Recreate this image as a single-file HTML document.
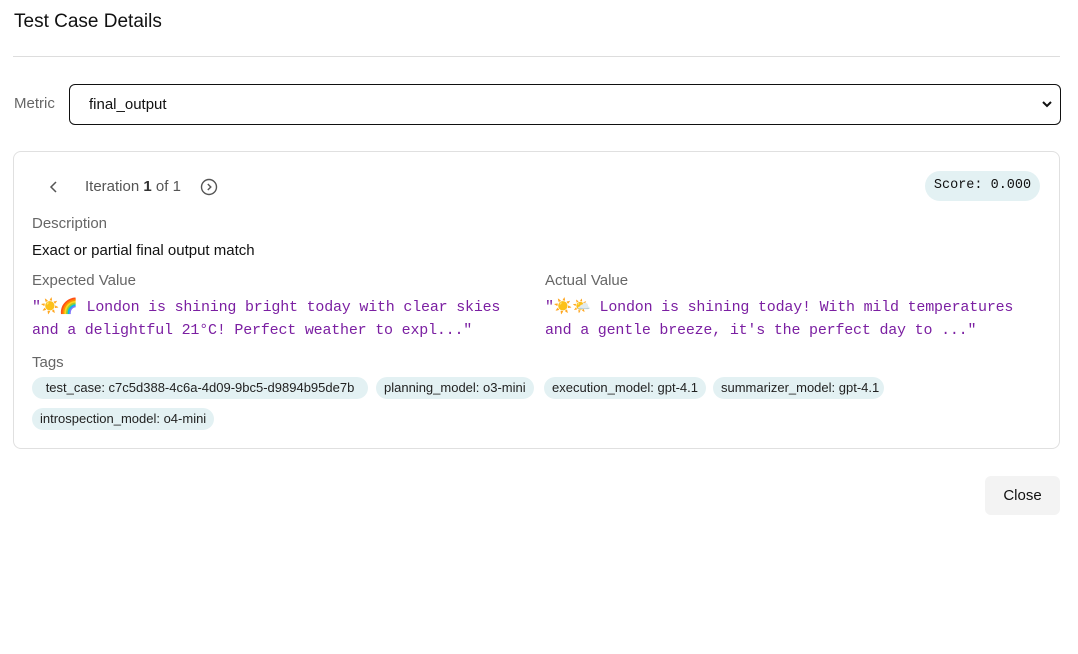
<!DOCTYPE html>
<html><head><style>
body{margin:0;width:1078px;height:654px;background:#fff;font-family:"Liberation Sans",sans-serif;color:#111;position:relative;overflow:hidden}
.a{position:absolute;white-space:nowrap}
.mono{font-family:"Liberation Mono",monospace;font-size:15px;letter-spacing:-0.2px;color:#7b1fa2;line-height:23px}
.lbl{font-size:15px;color:#666}
.tag{position:absolute;height:22px;line-height:22px;background:#e3f1f3;border-radius:11px;font-size:13px;padding:0 8px;color:#222;white-space:nowrap}
</style></head><body>
<div class="a" style="left:14px;top:11px;font-size:19px;color:#111">Test Case Details</div>
<div class="a" style="left:13px;top:56px;width:1047px;height:1px;background:#ddd"></div>
<div class="a lbl" style="left:14px;top:95px">Metric</div>
<div class="a" style="left:69px;top:84px;width:990px;height:39px;border:1px solid #111;border-radius:6px"></div>
<div class="a" style="left:89px;top:96px;font-size:15px">final_output</div>
<svg class="a" style="left:1041px;top:98px" width="12" height="12" viewBox="0 0 12 12"><path d="M2 4l4 4 4-4" stroke="#111" stroke-width="2" fill="none"/></svg>
<div class="a" style="left:13px;top:151px;width:1045px;height:296px;border:1px solid #e0e0e0;border-radius:8px"></div>
<svg class="a" style="left:48px;top:180px" width="12" height="14" viewBox="0 0 12 14"><path d="M8 2L3 7l5 5" stroke="#555" stroke-width="1.5" fill="none"/></svg>
<div class="a" style="left:85px;top:178px;font-size:15px;color:#555">Iteration <b style="color:#333">1</b> of 1</div>
<svg class="a" style="left:200px;top:178px" width="18" height="18" viewBox="0 0 18 18"><circle cx="9" cy="9" r="7.5" stroke="#555" stroke-width="1.4" fill="none"/><path d="M7.8 6l3 3-3 3" stroke="#555" stroke-width="1.4" fill="none"/></svg>
<div class="a" style="left:925px;top:171px;width:115px;height:30px;border-radius:15px;background:#e3f1f3;font-family:'Liberation Mono',monospace;font-size:13.5px;line-height:30px;text-align:center;color:#111">Score: 0.000</div>
<div class="a lbl" style="left:32px;top:215px">Description</div>
<div class="a" style="left:32px;top:242px;font-size:15px;color:#111">Exact or partial final output match</div>
<div class="a lbl" style="left:32px;top:272px">Expected Value</div>
<div class="a mono" style="left:32px;top:296px">"☀️🌈 London is shining bright today with clear skies<br>and a delightful 21°C! Perfect weather to expl..."</div>
<div class="a lbl" style="left:545px;top:272px">Actual Value</div>
<div class="a mono" style="left:545px;top:296px">"☀️🌤️ London is shining today! With mild temperatures<br>and a gentle breeze, it's the perfect day to ..."</div>
<div class="a lbl" style="left:32px;top:354px">Tags</div>
<div class="tag" style="left:32px;top:377px;width:320px;text-align:center">test_case: c7c5d388-4c6a-4d09-9bc5-d9894b95de7b</div>
<div class="tag" style="left:376px;top:377px">planning_model: o3-mini</div>
<div class="tag" style="left:544px;top:377px">execution_model: gpt-4.1</div>
<div class="tag" style="left:713px;top:377px;width:155px">summarizer_model: gpt-4.1</div>
<div class="tag" style="left:32px;top:408px">introspection_model: o4-mini</div>
<div class="a" style="left:985px;top:476px;width:75px;height:39px;background:#f3f3f3;border-radius:6px;font-size:15px;line-height:39px;text-align:center;color:#111">Close</div>
</body></html>
